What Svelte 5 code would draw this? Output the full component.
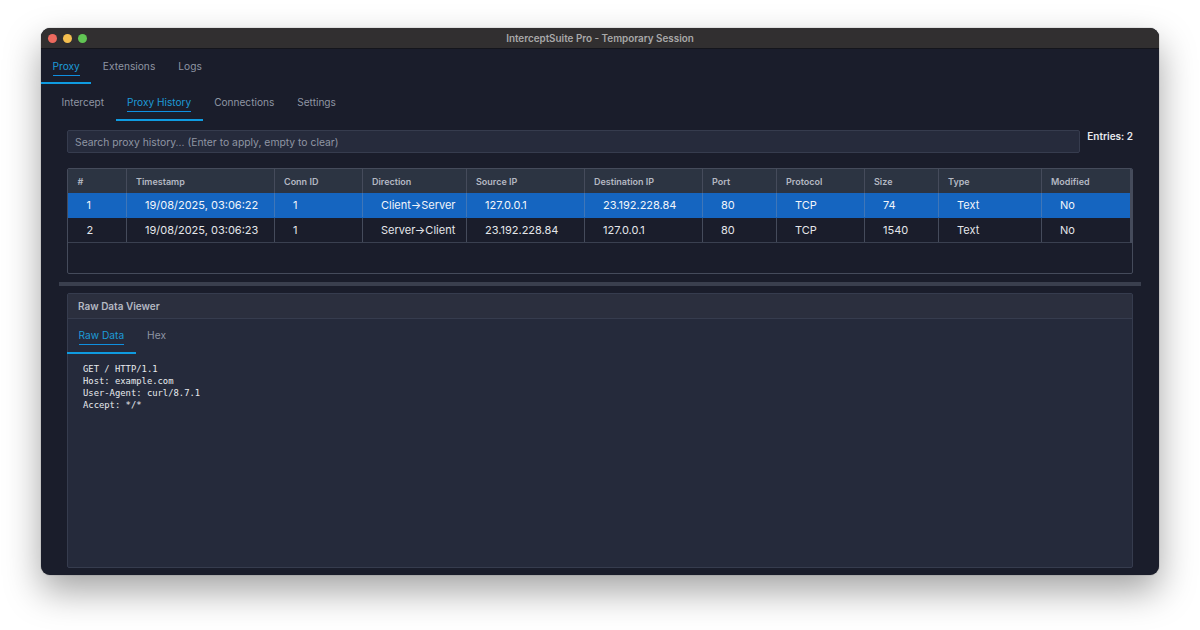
<script lang="ts">
	const columns = [
		{ label: '#', key: 'id', width: 58 },
		{ label: 'Timestamp', key: 'time', width: 148 },
		{ label: 'Conn ID', key: 'conn', width: 88 },
		{ label: 'Direction', key: 'dir', width: 104 },
		{ label: 'Source IP', key: 'src', width: 118 },
		{ label: 'Destination IP', key: 'dst', width: 118 },
		{ label: 'Port', key: 'port', width: 74 },
		{ label: 'Protocol', key: 'proto', width: 88 },
		{ label: 'Size', key: 'size', width: 74 },
		{ label: 'Type', key: 'type', width: 103 },
		{ label: 'Modified', key: 'mod', width: 90 }
	];

	const rows = [
		{ id: '1', time: '19/08/2025, 03:06:22', conn: '1', dir: 'Client→Server', src: '127.0.0.1', dst: '23.192.228.84', port: '80', proto: 'TCP', size: '74', type: 'Text', mod: 'No' },
		{ id: '2', time: '19/08/2025, 03:06:23', conn: '1', dir: 'Server→Client', src: '23.192.228.84', dst: '127.0.0.1', port: '80', proto: 'TCP', size: '1540', type: 'Text', mod: 'No' }
	];

	const raw = `GET / HTTP/1.1
Host: example.com
User-Agent: curl/8.7.1
Accept: */*`;
</script>

<div class="page">
	<div class="window">
		<header class="titlebar">
			<div class="lights">
				<span class="light red"></span>
				<span class="light yellow"></span>
				<span class="light green"></span>
			</div>
			<span class="title">InterceptSuite Pro - Temporary Session</span>
		</header>

		<nav class="main-tabs">
			<button class="tab active"><span>Proxy</span></button>
			<button class="tab"><span>Extensions</span></button>
			<button class="tab"><span>Logs</span></button>
		</nav>

		<nav class="sub-tabs">
			<button class="tab"><span>Intercept</span></button>
			<button class="tab active"><span>Proxy History</span></button>
			<button class="tab"><span>Connections</span></button>
			<button class="tab"><span>Settings</span></button>
		</nav>

		<div class="search-row">
			<input class="search" type="text" placeholder="Search proxy history... (Enter to apply, empty to clear)" />
			<span class="entries">Entries: 2</span>
		</div>

		<div class="table-wrap">
			<table>
				<colgroup>
					{#each columns as col}
						<col style="width: {col.width}px" />
					{/each}
				</colgroup>
				<thead>
					<tr>
						{#each columns as col}
							<th>{col.label}</th>
						{/each}
					</tr>
				</thead>
				<tbody>
					{#each rows as row, i}
						<tr class:selected={i === 0}>
							{#each columns as col}
								<td>{row[col.key]}</td>
							{/each}
						</tr>
					{/each}
				</tbody>
			</table>
		</div>

		<div class="splitter"></div>

		<section class="viewer">
			<div class="viewer-title">Raw Data Viewer</div>
			<nav class="viewer-tabs">
				<button class="tab active"><span>Raw Data</span></button>
				<button class="tab"><span>Hex</span></button>
			</nav>
			<pre class="raw">{raw}</pre>
		</section>
	</div>
</div>

<style>
	:global(body) {
		background: #fff;
		font-family: Inter, 'Liberation Sans', sans-serif;
	}

	.page {
		width: 1200px;
		height: 630px;
		box-sizing: border-box;
		padding: 28px 41px 55px;
		overflow: hidden;
	}

	.window {
		height: 547px;
		display: flex;
		flex-direction: column;
		background: #1a1d2b;
		border-radius: 9px;
		overflow: hidden;
		box-shadow: 0 0 1px rgba(40, 40, 45, 0.8), 0 16px 36px rgba(0, 0, 0, 0.36);
	}

	.titlebar {
		height: 21px;
		flex-shrink: 0;
		position: relative;
		display: flex;
		align-items: center;
		justify-content: center;
		background: #312f30;
		border-bottom: 1px solid #14151c;
		box-sizing: border-box;
	}

	.lights {
		position: absolute;
		left: 7px;
		top: 6px;
		display: flex;
		gap: 6px;
	}

	.light {
		width: 9px;
		height: 9px;
		border-radius: 50%;
	}

	.red {
		background: #ed6a5e;
	}

	.yellow {
		background: #f5bf4f;
	}

	.green {
		background: #61c554;
	}

	.title {
		font-size: 9.9px;
		font-weight: 600;
		color: #a8a8a8;
	}

	button {
		font-family: inherit;
		background: none;
		border: none;
		padding: 0;
		cursor: pointer;
	}

	.tab {
		display: flex;
		align-items: flex-start;
		justify-content: center;
		box-sizing: border-box;
		border-bottom: 2px solid transparent;
		color: #8f95a3;
		font-size: 10.2px;
	}

	.tab span {
		display: block;
		padding-bottom: 2px;
		line-height: 14px;
		border-bottom: 1px solid transparent;
	}

	.tab.active {
		color: #1d9bd8;
		border-bottom-color: #0f9be0;
	}

	.tab.active span {
		border-bottom-color: #0f8fe0;
	}

	.main-tabs {
		display: flex;
		height: 35px;
		flex-shrink: 0;
	}

	.main-tabs .tab {
		height: 35px;
		padding: 10px 11.5px 0;
	}

	.sub-tabs {
		display: flex;
		height: 37px;
		flex-shrink: 0;
		padding-left: 9px;
	}

	.sub-tabs .tab {
		height: 37px;
		padding: 11px 11.5px 0;
		font-size: 10.1px;
	}

	.search-row {
		display: flex;
		align-items: flex-start;
		gap: 7px;
		height: 23px;
		margin: 9px 26px 15px;
		flex-shrink: 0;
	}

	.search {
		flex: 1;
		height: 23px;
		box-sizing: border-box;
		padding: 0 7px;
		background: #262b3c;
		border: 1px solid #363c4e;
		border-radius: 2px;
		color: #d0d4dc;
		font-family: inherit;
		font-size: 10.35px;
		outline: none;
	}

	.search::placeholder {
		color: #8f95a3;
		opacity: 1;
	}

	.entries {
		font-size: 10px;
		font-weight: 600;
		line-height: 13px;
		color: #e8eaee;
	}

	.table-wrap {
		height: 106px;
		flex-shrink: 0;
		box-sizing: border-box;
		margin: 0 26px;
		background: #1a1d2b;
		border: 1px solid #454b5b;
		border-radius: 2px;
		overflow: hidden;
	}

	table {
		table-layout: fixed;
		width: 1063px;
		border-collapse: collapse;
		border-right: 2px solid #454b5b;
	}

	th {
		height: 24px;
		box-sizing: border-box;
		padding: 0 0 0 9.5px;
		background: #2c3442;
		border-right: 1px solid #454b5b;
		color: #b4b8c2;
		font-size: 9px;
		font-weight: 600;
		text-align: left;
		white-space: nowrap;
	}

	td {
		height: 24.5px;
		box-sizing: border-box;
		padding: 0 0 0 18.5px;
		border-right: 1px solid #454b5b;
		border-bottom: 1px solid #3a4050;
		color: #e4e6ea;
		font-size: 11px;
		white-space: nowrap;
	}

	tr.selected td {
		background: #1565c0;
		color: #f2f5fa;
		border-right-color: #3f76b8;
		border-bottom-color: #1565c0;
	}

	.splitter {
		height: 4px;
		flex-shrink: 0;
		margin: 8px 18px 7px;
		background: #3a3f4e;
	}

	.viewer {
		flex: 1;
		display: flex;
		flex-direction: column;
		min-height: 0;
		margin: 0 26px 7px;
		background: #252a3b;
		border: 1px solid #363c4e;
		border-radius: 2px;
	}

	.viewer-title {
		height: 24px;
		flex-shrink: 0;
		display: flex;
		align-items: center;
		padding-left: 10px;
		background: #2b2f3e;
		border-bottom: 1px solid #363c4e;
		color: #b4b8c2;
		font-size: 10px;
		font-weight: 600;
	}

	.viewer-tabs {
		display: flex;
		height: 35px;
		flex-shrink: 0;
		margin-left: -1px;
	}

	.viewer-tabs .tab {
		height: 35px;
		padding: 9px 11.5px 0;
		font-size: 10.2px;
	}

	.raw {
		margin: 0;
		padding: 9px 15px;
		font-family: 'DejaVu Sans Mono', 'Liberation Mono', monospace;
		font-size: 8.85px;
		line-height: 12px;
		color: #e8eaee;
	}
</style>
